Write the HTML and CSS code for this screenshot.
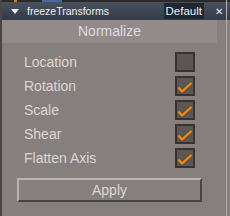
FILE: index.html
```html
<!DOCTYPE html>
<html lang="en">
<head>
    <meta charset="UTF-8">
    <title>freezeTransforms</title>
    <link rel="stylesheet" href="styles.css">
</head>
<body>

<div class="panel">
    <div class="strip"></div>
    <div class="titlebar">
        <span class="arrow"></span>
        <span class="title">freezeTransforms</span>
        <span class="preset">Default</span>
        <span class="close">&#x2715;</span>
    </div>
    <div class="body">
        <div class="section">Normalize</div>
        <div class="options">
            <div class="row"><span>Location</span><span class="check"></span></div>
            <div class="row"><span>Rotation</span><span class="check on"></span></div>
            <div class="row"><span>Scale</span><span class="check on"></span></div>
            <div class="row"><span>Shear</span><span class="check on"></span></div>
            <div class="row"><span>Flatten Axis</span><span class="check on"></span></div>
        </div>
        <button class="apply">Apply</button>
    </div>
</div>

<script>
    // tick marks for the enabled options
    document.querySelectorAll(".check.on").forEach(function (box) {
        box.innerHTML = '<svg width="16" height="16" viewBox="0 0 16 16"><path d="M1.5 9.5 L5 13.5 L14.5 5" fill="none" stroke="#ff8a00" stroke-width="2"/></svg>';
    });
</script>

</body>
</html>
```

FILE: styles.css
```css
body {
    margin: 0;
    background-color: #857f7e;
    font-family: "Liberation Sans", Arial, sans-serif;
}
.panel {
    width: 230px;
    height: 216px;
    display: flex;
    flex-direction: column;
    border-left: 2px solid #4a4646;
    box-sizing: border-box;
    position: relative;
}
.panel::after {
    content: "";
    position: absolute;
    top: 0;
    right: 3px;
    width: 1px;
    height: 216px;
    background-color: #b4aeac;
}
.strip {
    height: 2px;
    background: linear-gradient(90deg, #2a2a2a 0, #2a2a2a 12px, #d07a20 12px, #d07a20 15px, #2a2a2a 15px, #2a2a2a 40px, #4a6a9a 40px, #4a6a9a 60px, #2a2a2a 60px);
}
.titlebar {
    height: 18px;
    display: flex;
    align-items: center;
    background: linear-gradient(#4a5260, #333a46);
    color: #eef0f4;
    font-size: 11px;
    padding-right: 7px;
}
.arrow {
    width: 0;
    height: 0;
    margin-left: 9px;
    margin-right: 8px;
    border-left: 4.5px solid transparent;
    border-right: 4.5px solid transparent;
    border-top: 5px solid #f4f4f4;
}
.title {
    flex: 1;
    font-size: 10.5px;
}
.preset {
    background-color: #1f2731;
    padding: 0 2px 0 2px;
    height: 16px;
    line-height: 16px;
    font-size: 11.5px;
}
.close {
    margin-left: 11px;
    font-size: 10px;
    color: #e8eaee;
}
.body {
    flex: 1;
    display: flex;
    flex-direction: column;
}
.section {
    width: 215px;
    height: 23px;
    line-height: 23px;
    background-color: #928b89;
    color: #dcdcec;
    font-size: 14px;
    text-align: center;
}
.options {
    margin-top: 9px;
    display: flex;
    flex-direction: column;
    gap: 4px;
}
.row {
    height: 20px;
    display: flex;
    align-items: center;
    justify-content: space-between;
    padding-left: 22px;
    width: 171px;
    color: #dcd6d4;
    font-size: 14px;
}
.check {
    width: 16px;
    height: 16px;
    border: 2px solid #383333;
    background-color: #5b5554;
    display: flex;
}
.apply {
    margin: 10px 0 0 15px;
    width: 185px;
    height: 24px;
    background-color: #857f7e;
    border: 2px solid;
    border-color: #b9b3b1 #4a4444 #4a4444 #b9b3b1;
    color: #dcd6d4;
    font-family: "Liberation Sans", Arial, sans-serif;
    font-size: 14px;
    padding: 0;
}
```
